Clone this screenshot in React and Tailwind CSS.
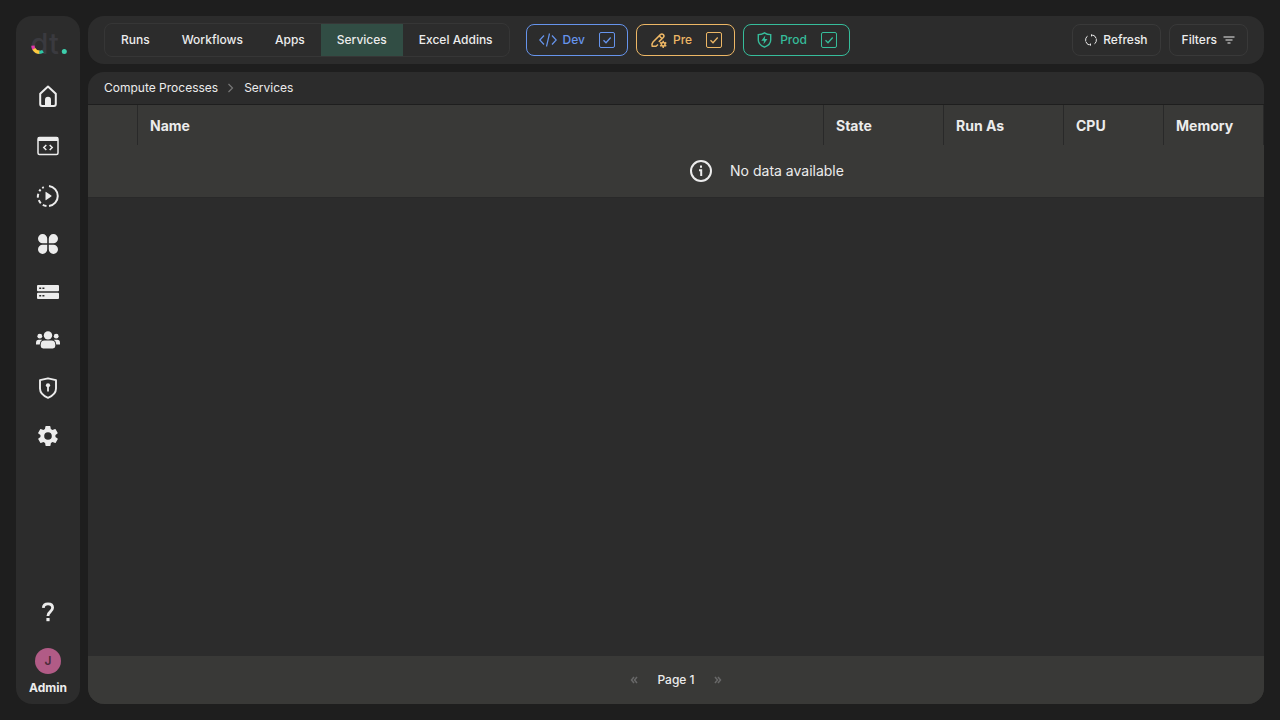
import React from "react";

function Logo() {
  return (
    <svg className="overflow-visible" width="40" height="40" viewBox="0 -8 40 40" role="img" aria-label="dt">
      <text x="2.5" y="23.5" fontSize="29" fontWeight="500" fill="#3a3a3f" fontFamily="Inter, sans-serif">d</text>
      <text x="21" y="23.5" fontSize="29" fontWeight="500" fill="#3a3a3f" fontFamily="Inter, sans-serif">t</text>
      <path d="M4.900 15.700C5 17 5.300 18.100 5.900 19.100" stroke="#df37a8" strokeWidth="3.400" fill="none" />
      <path d="M5.800 18.900C7.200 21.200 9.200 22.300 11.700 22.300" stroke="#fdca3f" strokeWidth="3.400" fill="none" />
      <path d="M11.400 22.300C12.900 22.300 14 21.900 15 21.200" stroke="#2fc6a4" strokeWidth="3.200" fill="none" />
      <circle cx="36.300" cy="21.400" r="2.500" fill="#3dceac" />
    </svg>
  );
}

const icons = {
  Home: (
    <>
      <path d="M4.2 9.8 12 2.6l7.8 7.2v10.3q0 1.9-1.9 1.9H6.1q-1.9 0-1.9-1.9Z" fill="none" stroke="currentColor" strokeWidth="2" strokeLinejoin="round" />
      <path d="M9 22v-6.3a3 3 0 0 1 6 0V22Z" fill="currentColor" />
    </>
  ),
  Code: (
    <>
      <rect x="2" y="3.5" width="20" height="17" rx="1.5" fill="none" stroke="currentColor" strokeWidth="1.5" />
      <path d="M2 3h20v4H2z" fill="currentColor" />
      <path d="m10.3 11-2.5 2.5 2.5 2.5m3.4-5 2.5 2.5-2.5 2.5" fill="none" stroke="currentColor" strokeWidth="1.5" />
    </>
  ),
  Runs: (
    <>
      <path d="M13 1.9a10.2 10.2 0 0 1 0 20.2" fill="none" stroke="currentColor" strokeWidth="2" />
      <path d="M10.5 22A10.2 10.2 0 0 1 6.8 20.8M4.8 19.2a10.2 10.2 0 0 1-2-3M1.9 13.7a10 10 0 0 1 .4-4M3.3 7.2a10 10 0 0 1 1.3-1.7M6.300 4.100a10 10 0 0 1 1.500-.9" fill="none" stroke="currentColor" strokeWidth="2" />
      <path d="M9.5 8.2v7.6q0 .8.7.3l5.1-3.7q.6-.4 0-.8l-5.1-3.7q-.7-.5-.7.3Z" fill="currentColor" />
    </>
  ),
  Apps: (
    <path d="M11.2 11.2H6.8A4.6 4.6 0 1 1 11.2 6.7Zm1.6 0V6.7a4.6 4.6 0 1 1 4.4 4.5Zm-1.6 1.6v4.5a4.6 4.6 0 1 1-4.4-4.5Zm1.6 0h4.4a4.6 4.6 0 1 1-4.4 4.5Z" fill="currentColor" />
  ),
  Servers: (
    <>
      <rect x="1" y="5" width="22" height="6.3" rx="1" fill="currentColor" />
      <rect x="1" y="12.7" width="22" height="6.3" rx="1" fill="currentColor" />
      <path d="M3.2 8.2h2m1.2 0h2m-5.2 7.6h2m1.2 0h2" stroke="#2c2c2c" strokeWidth="1.5" />
    </>
  ),
  Users: (
    <>
      <circle cx="12" cy="7.4" r="4.2" fill="currentColor" />
      <circle cx="3.8" cy="8.2" r="2.4" fill="currentColor" />
      <circle cx="20.2" cy="8.2" r="2.4" fill="currentColor" />
      <path d="M8.5 12.5h7q3.8 0 3.8 4.4v1.1q0 2.4-2.5 2.4H7.2q-2.500 0-2.500-2.400v-1.100q0-4.400 3.800-4.400ZM2.800 11.800h3.400q-2.200 1.300-2.500 4.800H0v-1.500q0-3.300 2.800-3.300Zm18.400 0h-3.400q2.200 1.300 2.500 4.800H24v-1.500q0-3.300-2.800-3.300Z" fill="currentColor" />
    </>
  ),
  Security: (
    <>
      <path d="M12 2.3 4 4.2v8.4c0 4 3.4 7.4 8 9.3 4.6-1.900 8-5.300 8-9.300V4.200Z" fill="none" stroke="currentColor" strokeWidth="1.9" strokeLinejoin="round" />
      <circle cx="12" cy="9.3" r="2.1" fill="currentColor" />
      <path d="M12 9v6.5" stroke="currentColor" strokeWidth="1.8" />
    </>
  ),
  Settings: (
    <path fillRule="evenodd" fill="currentColor" d="M19.4 13a7.5 7.5 0 0 0 0-2l2.1-1.6a.5.5 0 0 0 .1-.6l-2-3.5a.5.5 0 0 0-.6-.2l-2.5 1a7.3 7.3 0 0 0-1.7-1l-.4-2.6a.5.5 0 0 0-.5-.4h-4a.5.5 0 0 0-.5.4L9 5.100a7.300 7.300 0 0 0-1.700 1l-2.500-1a.5.5 0 0 0-.6.2l-2 3.500a.5.5 0 0 0 .1.6L4.500 11a7.500 7.500 0 0 0 0 2l-2.100 1.600a.5.5 0 0 0-.1.6l2 3.500a.5.5 0 0 0 .6.2l2.500-1a7.300 7.300 0 0 0 1.700 1l.4 2.600a.5.5 0 0 0 .5.4h4a.5.5 0 0 0 .5-.4l.4-2.600a7.300 7.300 0 0 0 1.700-1l2.500 1a.5.5 0 0 0 .6-.2l2-3.500a.5.5 0 0 0-.1-.6ZM12 15.800a3.800 3.800 0 1 1 0-7.600 3.800 3.800 0 0 1 0 7.600Z" />
  ),
};

function EnvToggle({ name, className, children }) {
  return (
    <label className={"flex h-8 items-center rounded-lg border px-3 " + className}>
      {children}
      <span className="text-xs font-medium">{name}</span>
      <span className="ml-3.5 grid size-4 place-items-center">
        <input type="checkbox" defaultChecked className="peer col-start-1 row-start-1 size-4 appearance-none rounded-xs border border-current" />
        <svg className="pointer-events-none col-start-1 row-start-1 hidden size-4 peer-checked:block" viewBox="0 0 16 16" fill="none" stroke="currentColor" strokeWidth="1.3">
          <path d="m4.500 8.300 2.500 2.500 4.700-5.300" />
        </svg>
      </span>
    </label>
  );
}

const tabs = ["Runs", "Workflows", "Apps", "Services", "Excel Addins"];
const th = "border-r border-[#292929] px-3 pt-0.5 text-left text-sm font-bold";

export default function App() {
  return (
    <div className="flex min-h-screen gap-2 bg-[#1e1e1e] p-4 font-['Inter',sans-serif] text-xs text-[#ececec] antialiased">
      <aside className="flex w-16 shrink-0 flex-col items-center rounded-2xl bg-[#2c2c2c] pt-1.5 pb-2">
        <Logo />
        <nav className="mt-[22px] flex flex-col gap-6">
          {Object.entries(icons).map(([name, icon]) => (
            <a key={name} href="#" aria-label={name} className={"flex items-center " + (name === "Code" ? "h-7" : "h-6")}>
              <svg width="24" height="24" viewBox="0 0 24 24">{icon}</svg>
            </a>
          ))}
        </nav>
        <a href="#" aria-label="Help" className="mt-auto mb-6">
          <svg width="24" height="24" viewBox="0 0 24 24" fill="none" stroke="currentColor" strokeWidth="2.800">
            <path d="M7.300 7.800C7.500 5.200 9.300 3.900 12 3.900c2.700 0 4.600 1.400 4.600 3.900 0 4-4.700 3.600-4.700 8.200" />
            <path d="M10.400 19.600h3.200" strokeWidth="3.200" />
          </svg>
        </a>
        <button type="button" className="flex flex-col items-center gap-1.5">
          <span className="flex size-[26px] items-center justify-center rounded-full bg-[#b15b86] font-semibold text-[#4b2b3b]">J</span>
          <span className="text-xs font-bold">Admin</span>
        </button>
      </aside>

      <div className="flex min-w-0 grow flex-col gap-2">
        <header className="flex h-12 items-center gap-2 rounded-2xl bg-[#2c2c2c] px-4">
          <div className="mr-2 flex h-[34px] overflow-hidden rounded-lg border border-[#363636]">
            {tabs.map((tab) => (
              <button key={tab} type="button" className={"px-4 font-medium whitespace-nowrap " + (tab === "Services" ? "bg-[#314d44]" : "")}>
                {tab}
              </button>
            ))}
          </div>
          <EnvToggle name="Dev" className="border-[#6694ec] text-[#6694ec]">
            <svg className="mr-1.5" width="18" height="16" viewBox="0 0 18 16" fill="none" stroke="currentColor" strokeWidth="1.2">
              <path d="m5 3.500-4.200 4.500L5 12.500m8-9 4.200 4.500-4.200 4.500M10.500 1.500l-3 13" />
            </svg>
          </EnvToggle>
          <EnvToggle name="Pre" className="border-[#edb765] text-[#edb765]">
            <svg className="mr-1.5 ml-0.5 overflow-visible" width="16" height="16" viewBox="0 0 16 16" fill="none" stroke="currentColor" strokeWidth="1.500">
              <path d="M7 12.500 5 14.200H1.200q-.8-2.300.8-4.200L9.400 2.600q1.500-1.300 2.900 0 1.400 1.500 0 2.900L7.800 9.900M8.300 3.900l2.800 2.800" strokeLinejoin="round" />
              <circle cx="12.200" cy="12.300" r="1.800" />
              <path d="M12.200 8.700v2M12.200 14v2M9.100 10.500l1.700 1M13.600 13.100l1.700 1M9.100 14.100l1.700-1M13.600 11.500l1.700-1" />
            </svg>
          </EnvToggle>
          <EnvToggle name="Prod" className="border-[#36bd9b] text-[#36bd9b]">
            <svg className="mr-2 " width="16" height="16" viewBox="0 0 16 16" fill="none" stroke="currentColor" strokeWidth="1.400">
              <path d="M8.500 .8Q6 2.500 2.300 2.600V8c0 3.500 3 5.900 6.200 7.200 3.200-1.300 6.200-3.700 6.200-7.200V2.600Q11 2.500 8.500 .8Z" />
              <path d="M9.300 3.500 5.300 8.700h2.700l-.5 3.600 4-5.200H8.800Z" fill="currentColor" stroke="none" />
            </svg>
          </EnvToggle>
          <button type="button" className="ml-auto flex h-8 items-center gap-1.5 rounded-lg border border-[#393939] px-3 font-medium">
            <svg width="12" height="12" viewBox="0 0 12 12" fill="none" stroke="currentColor">
              <path d="M4.200 11A5.200 5.200 0 0 1 2.800 1.800M7.800 1a5.200 5.200 0 0 1 1.400 9.200" strokeDasharray="5 .5" />
              <path d="M6 0v2.800l2-1.500ZM6 9.200V12l-2-1.500Z" fill="currentColor" stroke="none" />
            </svg>
            Refresh
          </button>
          <button type="button" className="flex h-8 items-center gap-1.5 rounded-lg border border-[#393939] px-3 font-medium whitespace-nowrap">
            Filters
            <svg width="12" height="12" viewBox="0 0 12 12" stroke="currentColor" strokeWidth="1.200">
              <path d="M.5 3h11M2.500 6h7M4.500 9h3" />
            </svg>
          </button>
        </header>

        <main className="flex grow flex-col overflow-hidden rounded-2xl bg-[#2c2c2c]">
          <nav aria-label="Breadcrumb" className="flex h-8 items-center px-4">
            <a href="#">Compute Processes</a>
            <svg className="mx-2" width="10" height="12" viewBox="0 0 10 12" fill="none" stroke="#777" strokeWidth="1.200">
              <path d="m2.500 2 4 4-4 4" />
            </svg>
            <a href="#">Services</a>
          </nav>
          <table className="w-full table-fixed border-separate border-spacing-0 border-y border-t-[#1e1e1e] border-b-[#292929] bg-[#393937]">
            <colgroup>
              <col className="w-[50px]" />
              <col />
              <col className="w-[120px]" />
              <col className="w-[120px]" />
              <col className="w-[100px]" />
              <col className="w-[100px]" />
            </colgroup>
            <thead>
              <tr className="h-10">
                <th className={th} aria-label="Select" />
                {["Name", "State", "Run As", "CPU", "Memory"].map((h) => (
                  <th key={h} scope="col" className={th}>{h}</th>
                ))}
              </tr>
            </thead>
            <tbody>
              <tr>
                <td colSpan={6} className="h-[52px] pl-[180px]">
                  <div className="flex items-center justify-center gap-4 text-sm">
                    <svg width="26" height="26" viewBox="0 0 26 26" fill="none" stroke="currentColor" strokeWidth="2">
                      <circle cx="13" cy="13" r="10" />
                      <path d="M13 7.500v2.300M11 12.200h2.200V18" />
                    </svg>
                    No data available
                  </div>
                </td>
              </tr>
            </tbody>
          </table>
          <footer className="mt-auto flex h-12 items-center justify-center gap-4 bg-[#393937] font-medium">
            <button type="button" disabled aria-label="Previous page" className="text-[#686868]">
              <svg width="14" height="12" viewBox="0 0 14 12" fill="none" stroke="currentColor" strokeWidth="1.500">
                <path d="M7 3 4.500 6 7 9m3-6L7.500 6 10 9" />
              </svg>
            </button>
            Page 1
            <button type="button" disabled aria-label="Next page" className="text-[#686868]">
              <svg width="14" height="12" viewBox="0 0 14 12" fill="none" stroke="currentColor" strokeWidth="1.500">
                <path d="m4 3 2.500 3L4 9m3-6 2.500 3L7 9" />
              </svg>
            </button>
          </footer>
        </main>
      </div>
    </div>
  );
}
